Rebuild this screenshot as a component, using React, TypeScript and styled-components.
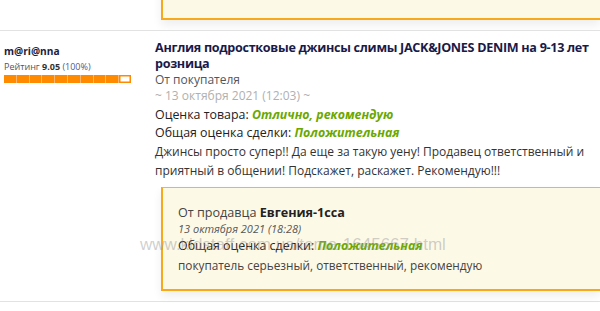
import React from "react";
import styled, { createGlobalStyle } from "styled-components";

const Global = createGlobalStyle`
  html, body { margin: 0; padding: 0; background: #fff; }
  body { font-family: "Open Sans", "Noto Sans", sans-serif; color: #222; }
`;

const Page = styled.div`
  position: relative;
  width: 600px;
  height: 311px;
  overflow: hidden;
  background: #fff;
`;

const TailRow = styled.div`
  display: flex;
  height: 20px;
  padding: 0 0 10px 161px;
  overflow: hidden;
  flex-direction: column;
  justify-content: flex-end;
`;

const Review = styled.section`
  display: flex;
  border-top: 1px solid #e2e2e2;
  padding: 9px 0 10px 0;
`;

const Author = styled.div`
  width: 151px;
  flex: 0 0 151px;
  padding-left: 4px;
`;

const UserName = styled.div`
  font-size: 10.2px;
  line-height: 16px;
  font-weight: 700;
  color: #1c1c3c;
  margin-top: 3px;
`;

const RatingLine = styled.div`
  font-size: 9px;
  line-height: 14px;
  color: #555;
  margin-top: 1px;
  b { color: #333; font-weight: 700; }
  span { color: #4d5a8c; }
`;

const Bar = styled.div`
  display: flex;
  gap: 1px;
  width: 127px;
  height: 8px;
  margin-top: 1px;
  background: #ffb56a;
`;

const Seg = styled.div<{ $empty?: boolean }>`
  flex: 1;
  background: ${(p) => (p.$empty ? "#fff" : "#ff8a00")};
  box-shadow: ${(p) => (p.$empty ? "inset 0 0 0 1.5px #ff8a00" : "none")};
`;

const Body = styled.div`
  flex: 1;
  min-width: 0;
`;

const Title = styled.div`
  font-size: 12.6px;
  line-height: 16px;
  font-weight: 700;
  letter-spacing: -0.3px;
  color: #1a1a48;
`;

const NoWrap = styled.span`
  white-space: nowrap;
`;

const Meta = styled.div<{ $light?: boolean }>`
  font-size: 12px;
  line-height: 16px;
  color: ${(p) => (p.$light ? "#b0b0b0" : "#555")};
  margin-top: 0;
`;

const Score = styled.div<{ $first?: boolean }>`
  font-size: 12.4px;
  line-height: 18px;
  color: #222;
  margin-top: ${(p) => (p.$first ? "2px" : "0")};
`;

const Good = styled.em`
  color: #6aa800;
  font-weight: 700;
  font-style: italic;
`;

const Text = styled.div`
  font-size: 12px;
  line-height: 19px;
  color: #333;
`;

const Reply = styled.div`
  margin: 7px 0 0 6px;
  background: #fdf9e7;
  border-top: 1px solid #f7b33a;
  border-left: 2px solid #f7a81b;
  border-bottom: 2px solid #f7a81b;
  padding: 16px 16px 14px 15px;
  box-shadow: 0 5px 9px rgba(0, 0, 0, 0.07);
`;

const TailReply = styled(Reply)`
  margin: 0;
  padding-bottom: 16px;
`;

const ReplyFrom = styled.div`
  font-size: 12.6px;
  line-height: 17px;
  color: #444;
  b { color: #222; font-weight: 700; }
`;

const ReplyDate = styled.div`
  font-size: 11px;
  line-height: 16px;
  font-style: italic;
  color: #555;
`;

const ReplyScore = styled.div`
  font-size: 12.4px;
  line-height: 18px;
  color: #222;
`;

const ReplyText = styled.div`
  font-size: 11.8px;
  line-height: 20px;
  color: #444;
`;

const Watermark = styled.div`
  position: absolute;
  left: 140px;
  top: 235px;
  font-family: "Liberation Sans", Arial, sans-serif;
  font-size: 17px;
  line-height: 20px;
  color: rgba(150, 150, 150, 0.45);
  pointer-events: none;
  white-space: nowrap;
`;

export default function App() {
  return (
    <>
      <Global />
      <Page>
        <TailRow>
          <TailReply>
            <ReplyText>покупатель вежливый, оплата быстрая, рекомендую</ReplyText>
          </TailReply>
        </TailRow>
        <Review>
          <Author>
            <UserName>m@ri@nna</UserName>
            <RatingLine>
              Рейтинг <b>9.05</b> <span>(100%)</span>
            </RatingLine>
            <Bar>
              {Array.from({ length: 10 }).map((_, i) => (
                <Seg key={i} $empty={i === 9} />
              ))}
            </Bar>
          </Author>
          <Body>
            <Title>
              Англия подростковые джинсы слимы JACK&amp;JONES DENIM на <NoWrap>9-13 лет</NoWrap> розница
            </Title>
            <Meta>От покупателя</Meta>
            <Meta $light>~ 13 октября 2021 (12:03) ~</Meta>
            <Score $first>
              Оценка товара: <Good>Отлично, рекомендую</Good>
            </Score>
            <Score>
              Общая оценка сделки: <Good>Положительная</Good>
            </Score>
            <Text>
              Джинсы просто супер!! Да еще за такую уену! Продавец ответственный и приятный в общении! Подскажет, раскажет. Рекомендую!!!
            </Text>
            <Reply>
              <ReplyFrom>
                От продавца <b>Евгения-1сса</b>
              </ReplyFrom>
              <ReplyDate>13 октября 2021 (18:28)</ReplyDate>
              <ReplyScore>
                Общая оценка сделки: <Good>Положительная</Good>
              </ReplyScore>
              <ReplyText>покупатель серьезный, ответственный, рекомендую</ReplyText>
            </Reply>
          </Body>
        </Review>
        <Review />
        <Watermark>www.kidstaff.com.ua/tema-1645667.html</Watermark>
      </Page>
    </>
  );
}
